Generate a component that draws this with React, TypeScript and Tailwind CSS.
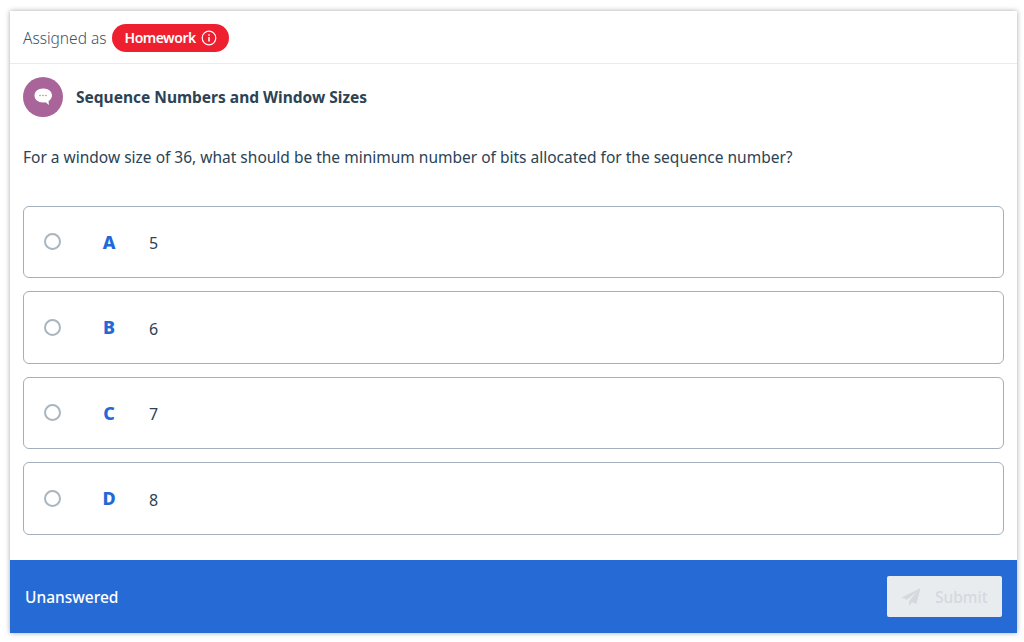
import React from 'react';

const options = [
  { key: 'A', value: '5' },
  { key: 'B', value: '6' },
  { key: 'C', value: '7' },
  { key: 'D', value: '8' },
];

function ChatIcon() {
  return (
    <svg width="21" height="20" viewBox="0 0 21 20">
      <path d="M10 1.500C5 1.500 1.500 4.500 1.500 8.500c0 4 3.500 7 8.500 7 .9 0 1.800-.1 2.600-.3l3.300 2.800-.3-4c2.100-1.300 3.400-3.300 3.400-5.500 0-4-3.500-7-8.500-7z" fill="#fff" />
      <circle cx="7" cy="8.500" r="0.700" fill="#a9659a" />
      <circle cx="10" cy="8.500" r="0.700" fill="#a9659a" />
      <circle cx="13" cy="8.500" r="0.700" fill="#a9659a" />
    </svg>
  );
}

function InfoIcon() {
  return (
    <svg width="16" height="16" viewBox="0 0 16 16" fill="none" stroke="#fff">
      <circle cx="8" cy="8" r="6.800" strokeWidth="1.200" />
      <path d="M8 7v4.500" strokeWidth="1.500" />
      <path d="M8 4.200v1.500" strokeWidth="1.500" />
    </svg>
  );
}

function PlaneIcon() {
  return (
    <svg width="20" height="20" viewBox="0 0 20 20" fill="#d4d9de">
      <path d="M19.500 1 .5 10.500l5.500 2.300L16 4.500 8 14v5l3-3.800 4.500 1.800z" />
    </svg>
  );
}

export default function App() {
  return (
    <div className="h-[642px] w-[1024px] bg-white pl-[10px] pr-[7px] pt-[11px] pb-[9px] font-['Noto_Sans',sans-serif]">
      <div className="flex h-full flex-col bg-white shadow-[0_0_5px_rgba(0,0,0,0.35)]">
        <div className="flex h-[53px] items-center border-b border-[#e8eaec] pl-[13px] pt-[2px]">
          <span className="mt-[1px] text-[15.5px] font-light text-[#3c5366]">Assigned as</span>
          <span className="ml-[5px] flex h-[28px] items-center gap-[5px] rounded-full bg-[#ee1f2f] pl-[13px] pr-[12px] text-[14px] font-semibold tracking-[-0.5px] text-white">
            <span className="-mt-[1px]">Homework</span>
            <InfoIcon />
          </span>
        </div>

        <div className="flex items-center pl-[13px] pt-[13px]">
          <div className="flex h-[40px] w-[40px] items-center justify-center rounded-full bg-[#a9659a]">
            <ChatIcon />
          </div>
          <h2 className="ml-[13px] mt-[2px] text-[15.5px] font-bold text-[#2b4355]">Sequence Numbers and Window Sizes</h2>
        </div>

        <p className="mt-[28px] pl-[13px] text-[15.5px] leading-[24px] text-[#2b4355]">
          For a window size of 36, what should be the minimum number of bits allocated for the sequence number?
        </p>

        <div className="mt-[36.5px] flex flex-col gap-[13px] px-[13px]">
          {options.map((o) => (
            <label key={o.key} className="flex h-[72.5px] items-center rounded-[6px] border border-[#a3afba] pl-[20px]">
              <span className="h-[17px] w-[17px] rounded-full border-2 border-[#a9b5bf] bg-white" />
              <span className="ml-[41px] mt-[1px] w-[14px] text-center text-[18px] font-extrabold text-[#2368d6]">{o.key}</span>
              <span className="ml-[33px] mt-[3px] text-[16px] text-[#2b4355]">{o.value}</span>
            </label>
          ))}
        </div>

        <div className="mt-auto flex h-[73px] items-center justify-between bg-[#266ad6] px-[15px]">
          <span className="mt-[2px] text-[15.5px] font-medium text-white">Unanswered</span>
          <button disabled className="flex h-[41px] w-[115px] items-center rounded-[2px] bg-[#e9ecef] pl-[14px] text-[15.5px] font-medium text-[#d4d9de]">
            <PlaneIcon />
            <span className="ml-[14px] mt-[2px]">Submit</span>
          </button>
        </div>
      </div>
    </div>
  );
}
